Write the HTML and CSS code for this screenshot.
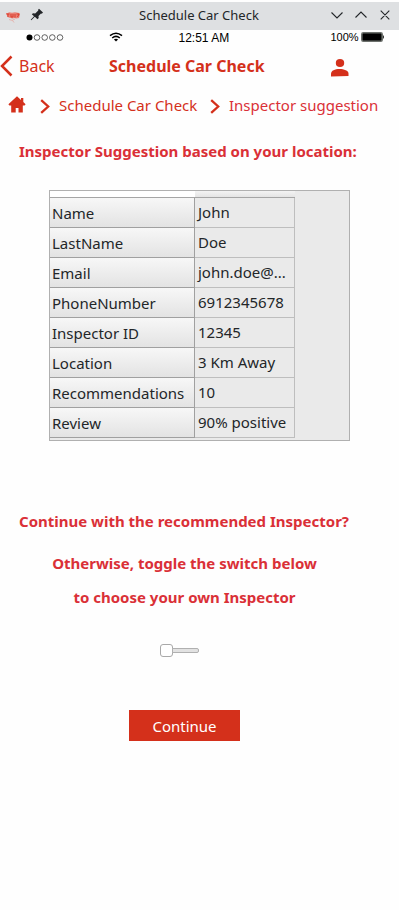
FILE: index.html
```
<!DOCTYPE html>
<html lang="en">
<head>
<meta charset="utf-8">
<title>Schedule Car Check</title>
<link rel="stylesheet" href="styles.css">
</head>
<body>
<div class="window">
  <header class="titlebar">
    <svg class="app-icon" width="16" height="16" viewBox="0 0 16 16"><path d="M1 5h2l1-.7 3 .5 3-.5 4.500.7.500 1.500-1 3.500-3 .5-1.500-.5-2 .5-3-.7-2-.800z" fill="#ea8176"/><path d="M1.500 6h3M3 6v3M6 6v3h2V6M10 6v3.500M11.500 6h2.500l-1.500 3" fill="none" stroke="#d93e2e"/><path d="m4 11.500 3.500 1 1.500 2M7 12.500l3-1.500" fill="none" stroke="#e5b5b0"/></svg>
    <svg class="pin" width="14" height="14" viewBox="0 0 14 14"><path d="m9 .8 4 3.700-1.200 1.200-.8-.2-2.500 2.500.2 2-1.200 1.200-2.700-2.500L1.300 12.300l-.6-.6 3.300-3.400L1.800 6.300 3 5.200l2.200.2L8.300 2.500l-.2-.8z" fill="#232629"/></svg>
    <span class="window-title">Schedule Car Check</span>
    <svg class="controls" width="62" height="14" viewBox="0 0 62 14"><path d="m1.500 4.500 5.500 5.500 5.500-5.500M25.500 9.500 31 4l5.500 5.500M50.700 2.700l8.600 8.600M59.300 2.700l-8.600 8.600" fill="none" stroke="#232629" stroke-width="1.100"/></svg>
  </header>
  <div class="status">
    <svg class="signal" width="38" height="8" viewBox="0 0 38 8"><circle cx="3.500" cy="3.500" r="3" fill="#000"/><g fill="none" stroke="#222" stroke-width=".7"><circle cx="11" cy="3.500" r="2.800"/><circle cx="18.700" cy="3.500" r="2.800"/><circle cx="26.300" cy="3.500" r="2.800"/><circle cx="34" cy="3.500" r="2.800"/></g></svg>
    <svg class="wifi" width="14" height="10" viewBox="0 0 14 10"><g fill="none" stroke="#000" stroke-width="1.500"><path d="M1 3.700q6-5 12 0M3.200 6q3.800-3.200 7.600 0"/></g><path d="M4.900 7.400q2.100-1.500 4.200 0L7 9.500z"/></svg>
    <span class="clock">12:51 AM</span>
    <span class="percent">100%</span>
    <svg class="battery" width="24" height="10" viewBox="0 0 24 10"><rect x=".8" y=".8" width="20.400" height="8.400" rx="1.500" fill="#000" stroke="#6d716d" stroke-width="1.600"/><path d="M22 3q2 2 0 4z" fill="#222"/></svg>
  </div>
  <nav class="navbar">
    <svg class="back-arrow" width="13" height="22" viewBox="0 0 13 22"><path d="M11.500 1.500 2 11l9.500 9.500" fill="none" stroke="#d4301b" stroke-width="2.500"/></svg>
    <span class="back">Back</span>
    <span class="page-title">Schedule Car Check</span>
    <svg class="user" width="18" height="19" viewBox="0 0 18 19"><ellipse cx="9" cy="4" rx="4.200" ry="4" fill="#d4301b"/><path d="M0 17.500v-2.700C0 11.500 4 10 8.500 10s9 1.500 9 4.500v2.500z" fill="#d4301b"/></svg>
  </nav>
  <div class="crumbs">
    <svg class="home" width="18" height="17" viewBox="0 0 18 17"><path d="M9 .3.400 8.200l1 1.300h1.800v7h4.500v-4.500h2.800v4.500h4.300v-7h1.800l1-1.300L15.300 6V2h-2.300v1.900z" fill="#d4301b"/></svg>
    <svg class="sep sep-one" width="10" height="15" viewBox="0 0 10 15"><path d="m1.200 1.200 7 6.300-7 6.300" fill="none" stroke="#d4301b" stroke-width="2.300"/></svg>
    <span class="crumb-one">Schedule Car Check</span>
    <svg class="sep sep-two" width="10" height="15" viewBox="0 0 10 15"><path d="m1.200 1.200 7 6.300-7 6.300" fill="none" stroke="#d4301b" stroke-width="2.300"/></svg>
    <span class="crumb-two">Inspector suggestion</span>
  </div>
  <h1 class="lead">Inspector Suggestion based on your location:</h1>
  <div class="sheet">
    <div class="sheet-head"><span></span><span></span></div>
    <div class="row"><span class="key">Name</span><span class="value">John</span></div>
    <div class="row"><span class="key">LastName</span><span class="value">Doe</span></div>
    <div class="row"><span class="key">Email</span><span class="value">john.doe@...</span></div>
    <div class="row"><span class="key">PhoneNumber</span><span class="value">6912345678</span></div>
    <div class="row"><span class="key">Inspector ID</span><span class="value">12345</span></div>
    <div class="row"><span class="key">Location</span><span class="value">3 Km Away</span></div>
    <div class="row"><span class="key">Recommendations</span><span class="value">10</span></div>
    <div class="row"><span class="key">Review</span><span class="value">90% positive</span></div>
  </div>
  <p class="question">Continue with the recommended Inspector?</p>
  <p class="hint">Otherwise, toggle the switch below</p>
  <p class="hint hint-last">to choose your own Inspector</p>
  <div class="switch"><span class="knob"></span><span class="track"></span></div>
  <button class="continue">Continue</button>
</div>
</body>
</html>
```
FILE: styles.css
```
* { box-sizing: border-box; }
body {
  margin: 0;
  background: #fff;
  font: 15px/20px "Noto Sans", sans-serif;
  color: #232629;
}
.window { width: 399px; height: 910px; padding-top: 2px; background: #fefefe; white-space: nowrap; overflow: hidden; }
svg { display: block; flex: none; }
span { flex: none; }

.titlebar { display: flex; height: 28px; background: #dee0e2; font-size: 13px; line-height: 26px; }
.app-icon { margin: 6px 0 0 5px; }
.pin { margin: 6px 0 0 9px; }
.window-title { width: 120px; margin-left: 95px; }
.controls { margin: 6px 0 0 71px; }

.status { display: flex; height: 15px; font: 12px/15px "Liberation Sans", sans-serif; color: #000; }
.signal { margin: 4px 0 0 26px; }
.wifi { margin: 2px 0 0 45px; }
.clock { width: 52px; margin-left: 55.5px; line-height: 16px; }
.percent { width: 28px; margin-left: 100px; font-size: 11px; }
.battery { margin: 2px 0 0 2.5px; }

.navbar { display: flex; height: 45px; color: #d4301b; font-size: 16px; line-height: 42px; }
.back-arrow { margin-top: 10px; }
.back { width: 36px; margin-left: 6px; }
.page-title { width: 156px; margin-left: 54px; font-weight: 700; }
.user { margin: 14px 0 0 66px; }

.crumbs { display: flex; height: 32px; color: #d4301b; line-height: 31px; }
.home { margin: 6px 0 0 7.5px; }
.sep-one { margin: 9px 0 0 14px; }
.crumb-one { width: 138px; margin-left: 9.5px; }
.sep-two { margin: 9px 0 0 12.5px; }
.crumb-two { margin-left: 9.5px; color: #da3037; }

.lead, .question, .hint { margin: 0; font-size: 15px; font-weight: 700; line-height: 20px; color: #da3037; }
.lead { margin: 19px 0 0 19px; }
.sheet { width: 301px; height: 251px; margin: 29px 0 0 49px; border: 1px solid #b0b0b0; background: #eaeaea; }
.sheet-head { display: flex; width: 245px; height: 7px; border-bottom: 1px solid #a5a5a5; }
.sheet-head span:first-child { width: 145px; background: #fff; }
.sheet-head span:last-child { width: 100px; background: linear-gradient(#f3f3f3, #e4e4e4); }
.row { display: flex; width: 245px; height: 30px; }
.key { width: 145px; padding-left: 2px; line-height: 31px; border-right: 1px solid #a0a0a0; border-bottom: 1px solid #a0a0a0; background: linear-gradient(#f7f7f7, #e3e3e3); }
.value { width: 100px; padding-left: 3px; line-height: 29px; border-right: 1px solid #bebebe; border-bottom: 1px solid #bebebe; }

.question { margin: 70px 0 0 19px; }
.hint { width: 369px; margin-top: 22px; text-align: center; }
.hint-last { margin-top: 14px; }
.switch { display: flex; align-items: center; width: 39px; height: 13px; margin: 37px 0 0 160px; }
.knob { width: 13px; height: 13px; border: 1px solid #a9a9a9; border-radius: 3px; background: #fff; }
.track { width: 27px; height: 5px; margin-left: -1px; border: 1px solid #b0b0b0; border-radius: 0 2px 2px 0; background: #e2e2e2; }
.continue { display: block; width: 111px; height: 31px; margin: 53px 0 0 129px; padding: 2px 0 0; border: 0; background: #d4301b; color: #fff; font: 15px/29px "Noto Sans", sans-serif; }
```
